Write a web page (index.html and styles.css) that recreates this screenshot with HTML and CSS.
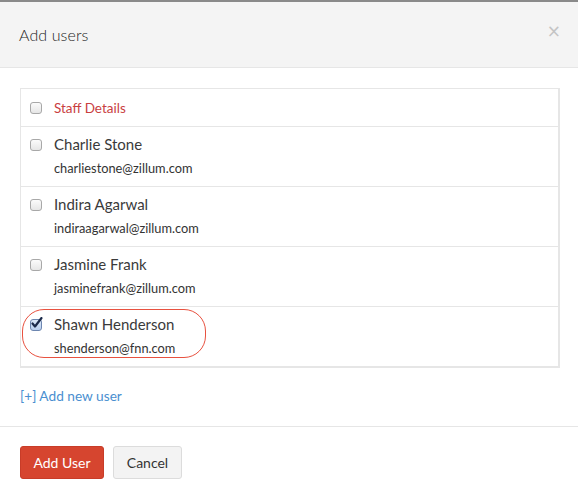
FILE: index.html
```html
<!DOCTYPE html>
<html>
<head>
<meta charset="utf-8">
<link rel="stylesheet" href="styles.css">
</head>
<body>
<div class="topline"></div>
<div class="header">
  <span class="title">Add users</span>
  <span class="close">&#215;</span>
</div>
<div class="body">
  <div class="list">
    <div class="row head">
      <span class="cb"></span>
      <span class="staff">Staff Details</span>
    </div>
    <div class="row user">
      <span class="cb"></span>
      <div class="info"><div class="name">Charlie Stone</div><div class="email">charliestone@zillum.com</div></div>
    </div>
    <div class="row user">
      <span class="cb"></span>
      <div class="info"><div class="name">Indira Agarwal</div><div class="email">indiraagarwal@zillum.com</div></div>
    </div>
    <div class="row user">
      <span class="cb"></span>
      <div class="info"><div class="name">Jasmine Frank</div><div class="email">jasminefrank@zillum.com</div></div>
    </div>
    <div class="row user selected">
      <span class="cb checked"><svg width="13" height="13" viewBox="0 0 13 13"><path d="M2.5 6.5 L5 9.5 L11.5 1" fill="none" stroke="#1b2a4a" stroke-width="2.2" stroke-linecap="round" stroke-linejoin="round"/></svg></span>
      <div class="info"><div class="name">Shawn Henderson</div><div class="email">shenderson@fnn.com</div></div>
      <span class="ring"></span>
    </div>
  </div>
  <div class="addnew">[+] Add new user</div>
</div>
<div class="footer">
  <button class="btn primary">Add User</button>
  <button class="btn secondary">Cancel</button>
</div>
</body>
</html>
```

FILE: styles.css
```css
* { box-sizing: border-box; }
html, body { margin: 0; padding: 0; background: #fff; }
body { font-family: "Lato", "Liberation Sans", sans-serif; color: #333; width: 578px; }
.topline { height: 2px; background: #8a8a8a; }
.header {
  height: 66px;
  background: #f4f4f4;
  border-bottom: 1px solid #e6e6e6;
  display: flex;
  align-items: center;
  justify-content: space-between;
  padding: 0 19px 0 19px;
}
.title { font-size: 16px; font-weight: 300; color: #1e1e1e; margin-top: 0; letter-spacing: 0.1px; }
.close { font-size: 17px; color: #c4c4c4; margin-top: -8px; margin-right: -2px; font-family: "DejaVu Sans", sans-serif; }
.body { padding: 20px 18px 0 20px; }
.list { border: 1px solid #e6e6e6; border-bottom-width: 2px; border-right-width: 2px; }
.row { display: flex; align-items: flex-start; position: relative; padding-left: 9px; }
.row + .row { border-top: 1px solid #e6e6e6; }
.row.head { height: 37px; align-items: center; }
.row.user { height: 60px; padding-top: 8px; }
.cb {
  width: 12px; height: 12px; flex: none;
  border: 1px solid #a8a8a8; border-radius: 3px;
  background: linear-gradient(#fbfbfb, #e6e6e6);
  margin-right: 12px;
  position: relative;
}
.row.user .cb { margin-top: 4px; }
.cb.checked { background: linear-gradient(#dbe8f8, #b9cfee); border-color: #6d86b0; }
.cb.checked svg { position: absolute; left: -1px; top: -3px; }
.staff { font-size: 13.5px; color: #c9403f; }
.name { font-size: 15px; line-height: 18px; color: #3a3a3a; }
.email { font-size: 12.8px; line-height: 16px; color: #333; margin-top: 7px; }
.ring {
  position: absolute; left: 1px; top: 2px; width: 184px; height: 49px;
  border: 1px solid #e8513f; border-radius: 22px;
}
.addnew { font-size: 13.7px; color: #4a8fd0; margin-top: 20px; height: 16px; line-height: 16px; }
.footer {
  margin-top: 22px;
  border-top: 1px solid #e6e6e6;
  padding: 19px 20px;
  display: flex; gap: 9px;
}
.btn {
  font-family: "Lato", "Liberation Sans", sans-serif;
  font-size: 14px; height: 33px; border-radius: 3px; padding: 0; cursor: pointer;
}
.btn.primary { background: #d6452f; color: #fff; border: 1px solid #c83c28; width: 84px; }
.btn.secondary { background: #f3f3f3; color: #333; border: 1px solid #dcdcdc; width: 69px; }
```
